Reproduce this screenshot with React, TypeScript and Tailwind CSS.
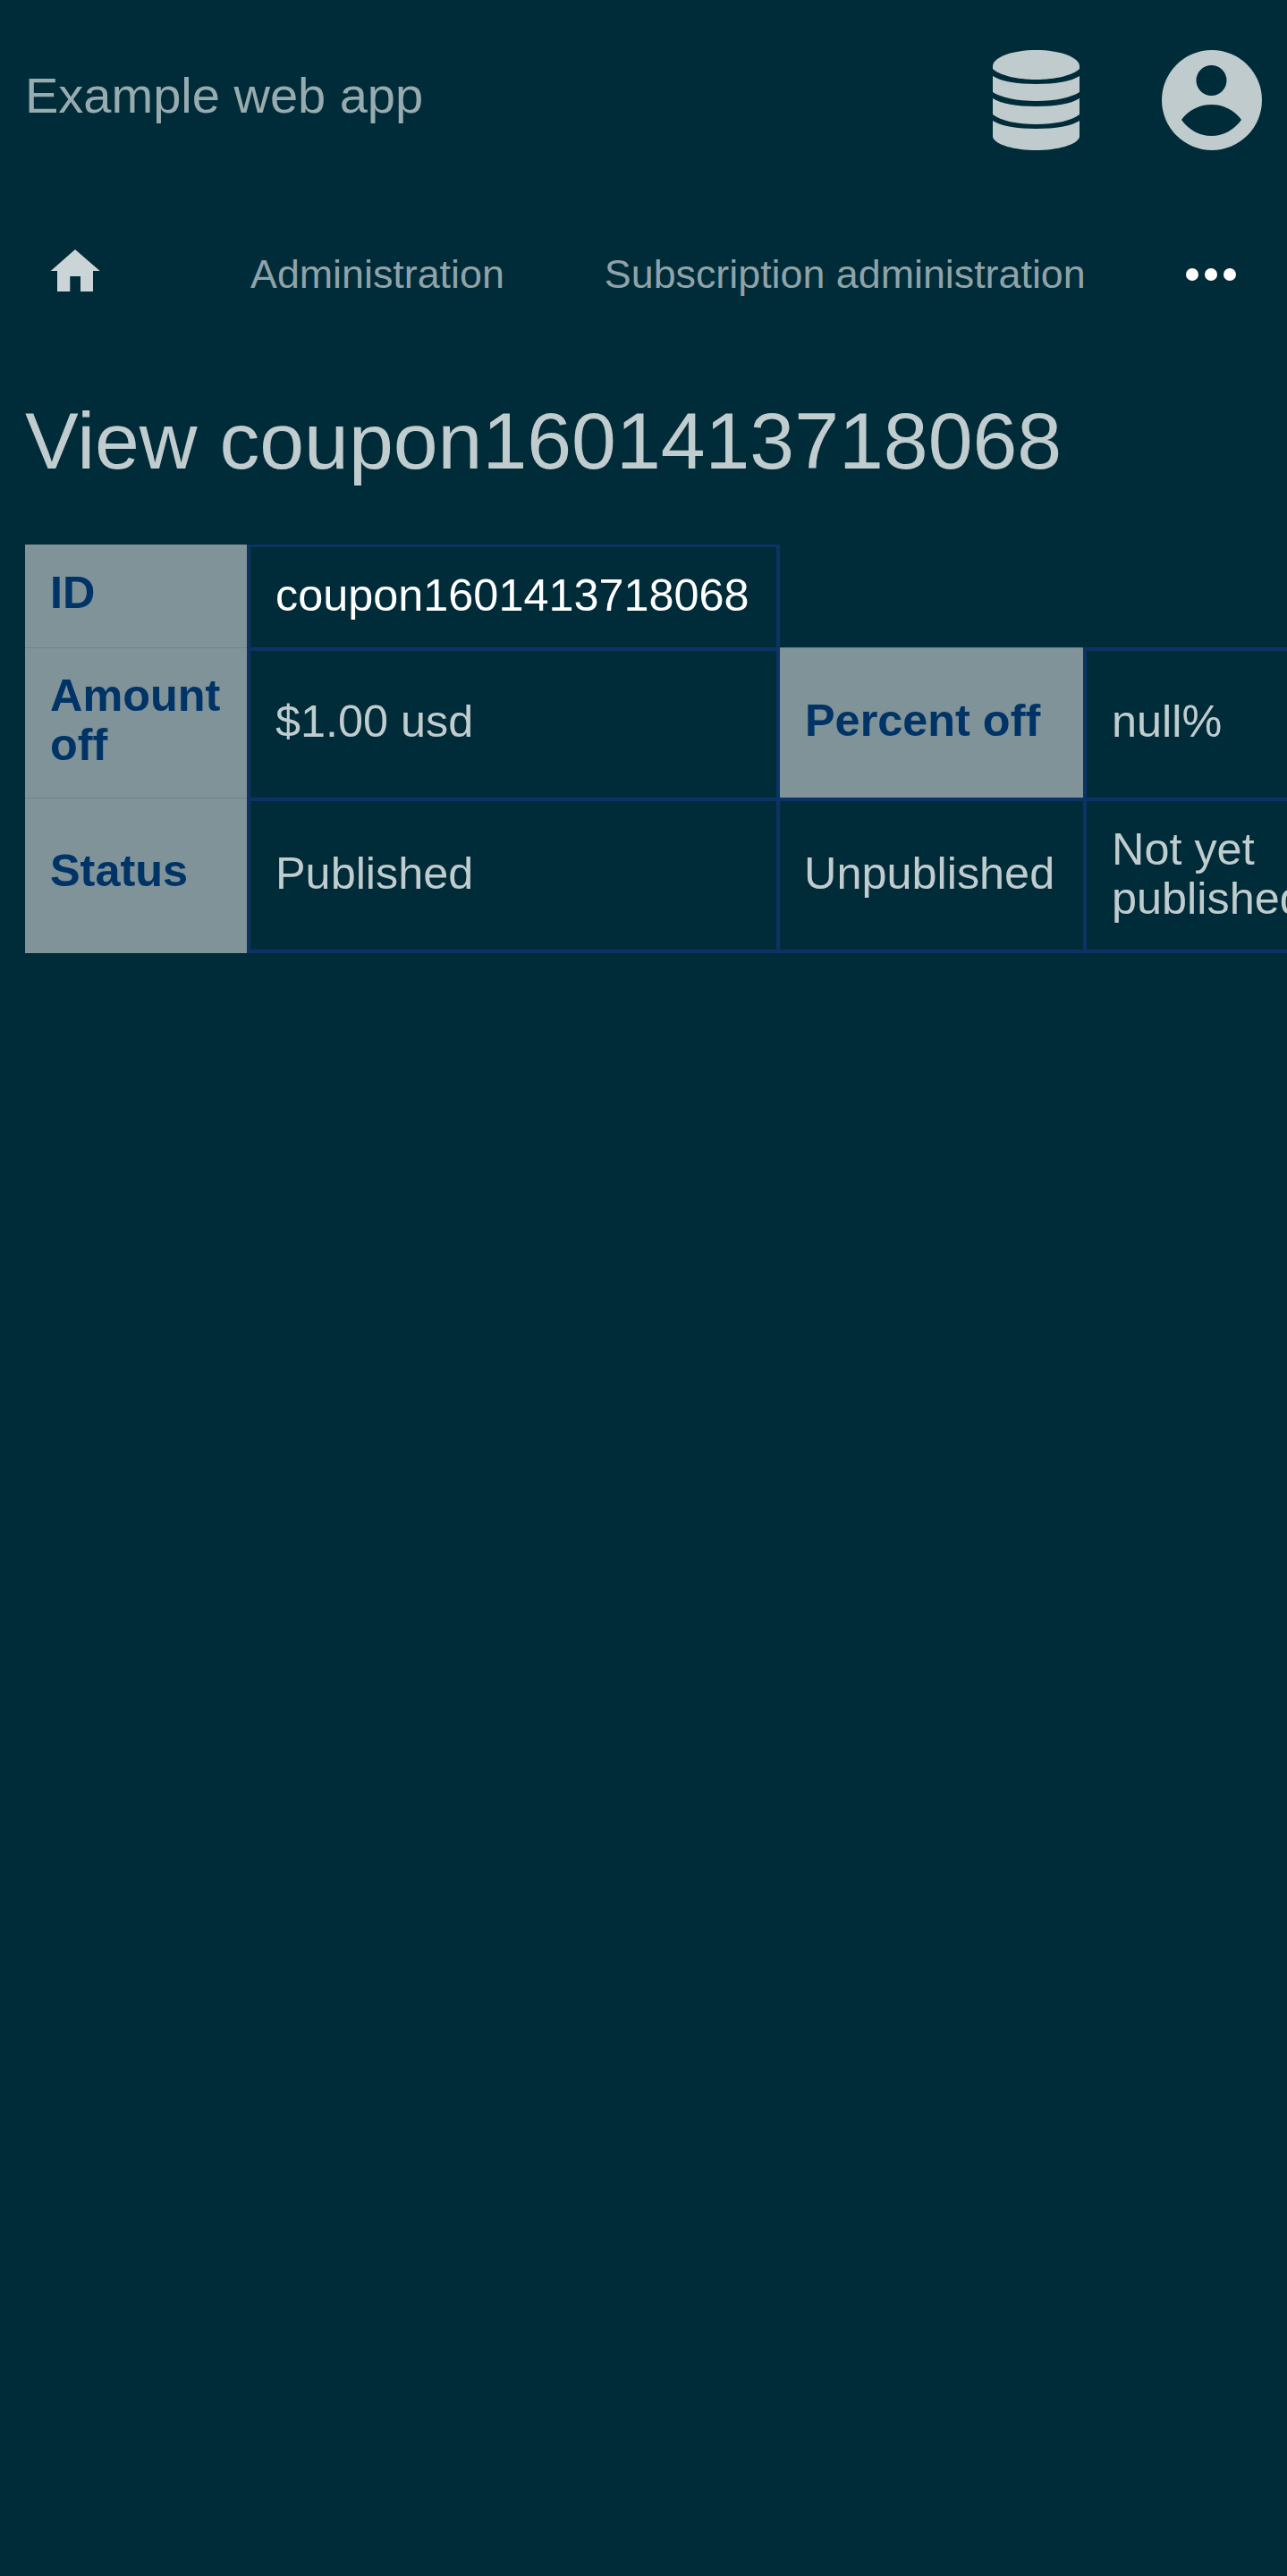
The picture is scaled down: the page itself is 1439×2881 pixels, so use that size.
import React from "react";

const thBase = "bg-[#7f9399] text-[#003366] font-bold text-left align-middle pl-7 pr-2 border-t border-[#6f868c] leading-[55px]";
const tdBase = "border-[#0b3464] text-[#c0cccd] align-middle leading-[55px] pb-[5px]";

export default function App() {
  return (
    <div className="min-h-[2881px] w-full overflow-hidden bg-[#002b38] font-['Liberation_Sans',Arial,sans-serif]">
      <header className="flex h-[224px] items-center pl-7 pr-7">
        <div className="flex-1 pb-[10px] text-[56px] text-[#98abae]">Example web app</div>
        <svg className="h-[112px] w-[97px] text-[#bfcbcd]" viewBox="0 0 97 112" fill="currentColor">
          <path d="M0 18C0 8 22 0 48.5 0C75 0 97 8 97 18V21C90 28 70 33 48.5 33C27 33 7 28 0 21Z" />
          <path d="M0 29C9 35 27 38 48.5 38C70 38 88 35 97 29V47C88 53 70 57 48.5 57C27 57 9 53 0 47Z" />
          <path d="M0 54C9 60 27 63 48.5 63C70 63 88 60 97 54V72C88 79 70 83 48.5 83C27 83 9 79 0 72Z" />
          <path d="M0 79C9 85 27 88 48.5 88C70 88 88 85 97 79V97C95 106 72 112 48.5 112C25 112 2 106 0 97Z" />
        </svg>
        <svg className="ml-[92px] h-[112px] w-[112px] text-[#bfcbcd]" viewBox="0 0 112 112">
          <path
            fill="currentColor"
            fillRule="evenodd"
            d="M56 0a56 56 0 1 0 0 112a56 56 0 1 0 0-112ZM55.5 17a17 17 0 1 1 0 34a17 17 0 1 1 0-34ZM22 78C30 67 42 61 55.5 61C69 61 81 67 89 78C81 89 69 96 55.5 96C42 96 30 89 22 78Z"
          />
        </svg>
      </header>

      <nav className="flex h-[164px] items-center text-[44.8px] text-[#8fa3a8]">
        <svg className="mb-2 ml-14 h-[48px] w-[56px] text-[#cbd5d7]" viewBox="0 0 56 48">
          <path
            fill="currentColor"
            d="M28 1L55.7 25H48V48H34V31H22.3V48H8V25H0.7Z"
          />
        </svg>
        <a className="ml-[168px] pt-[2px]">Administration</a>
        <a className="ml-[112px] pt-[2px]">Subscription administration</a>
        <svg className="ml-[112px] mt-[2px] h-[14px] w-[56px]" viewBox="0 0 56 14">
          <circle cx="7" cy="7" r="7" fill="#fff" />
          <circle cx="28" cy="7" r="7" fill="#fff" />
          <circle cx="49" cy="7" r="7" fill="#fff" />
        </svg>
      </nav>

      <h1 className="mt-[55px] mb-[66px] px-7 text-[89.6px] font-normal leading-[100px] text-[#c0cccd]">
        View coupon1601413718068
      </h1>

      <div className="pl-7">
        <table className="w-[1493px] table-fixed border-separate border-spacing-0 text-[50.4px]">
          <colgroup>
            <col className="w-[248px]" />
            <col className="w-[596px]" />
            <col className="w-[339px]" />
            <col />
          </colgroup>
          <tbody>
            <tr className="h-[115px]">
              <th className={thBase + " border-t-0 pb-2"}>ID</th>
              <td className={tdBase + " border-x-4 border-t-[3px] pl-7 !text-white"}>coupon1601413718068</td>
              <td />
              <td />
            </tr>
            <tr className="h-[168px]">
              <th className={thBase + " pb-2"}>Amount off</th>
              <td className={tdBase + " border-x-4 border-t-4 !pb-2 pl-7"}>$1.00 usd</td>
              <th className={thBase + " pb-[6px]"}>Percent off</th>
              <td className={tdBase + " border-l-4 border-t-4 !pb-2 pl-7"}>null%</td>
            </tr>
            <tr className="h-[174px]">
              <th className={thBase + " pb-3"}>Status</th>
              <td className={tdBase + " border-x-4 border-y-4 pl-7"}>Published</td>
              <td className={tdBase + " border-y-4 pl-[27px]"}>Unpublished</td>
              <td className={tdBase + " border-l-4 border-y-4 pl-7"}>Not yet published</td>
            </tr>
          </tbody>
        </table>
      </div>
    </div>
  );
}
